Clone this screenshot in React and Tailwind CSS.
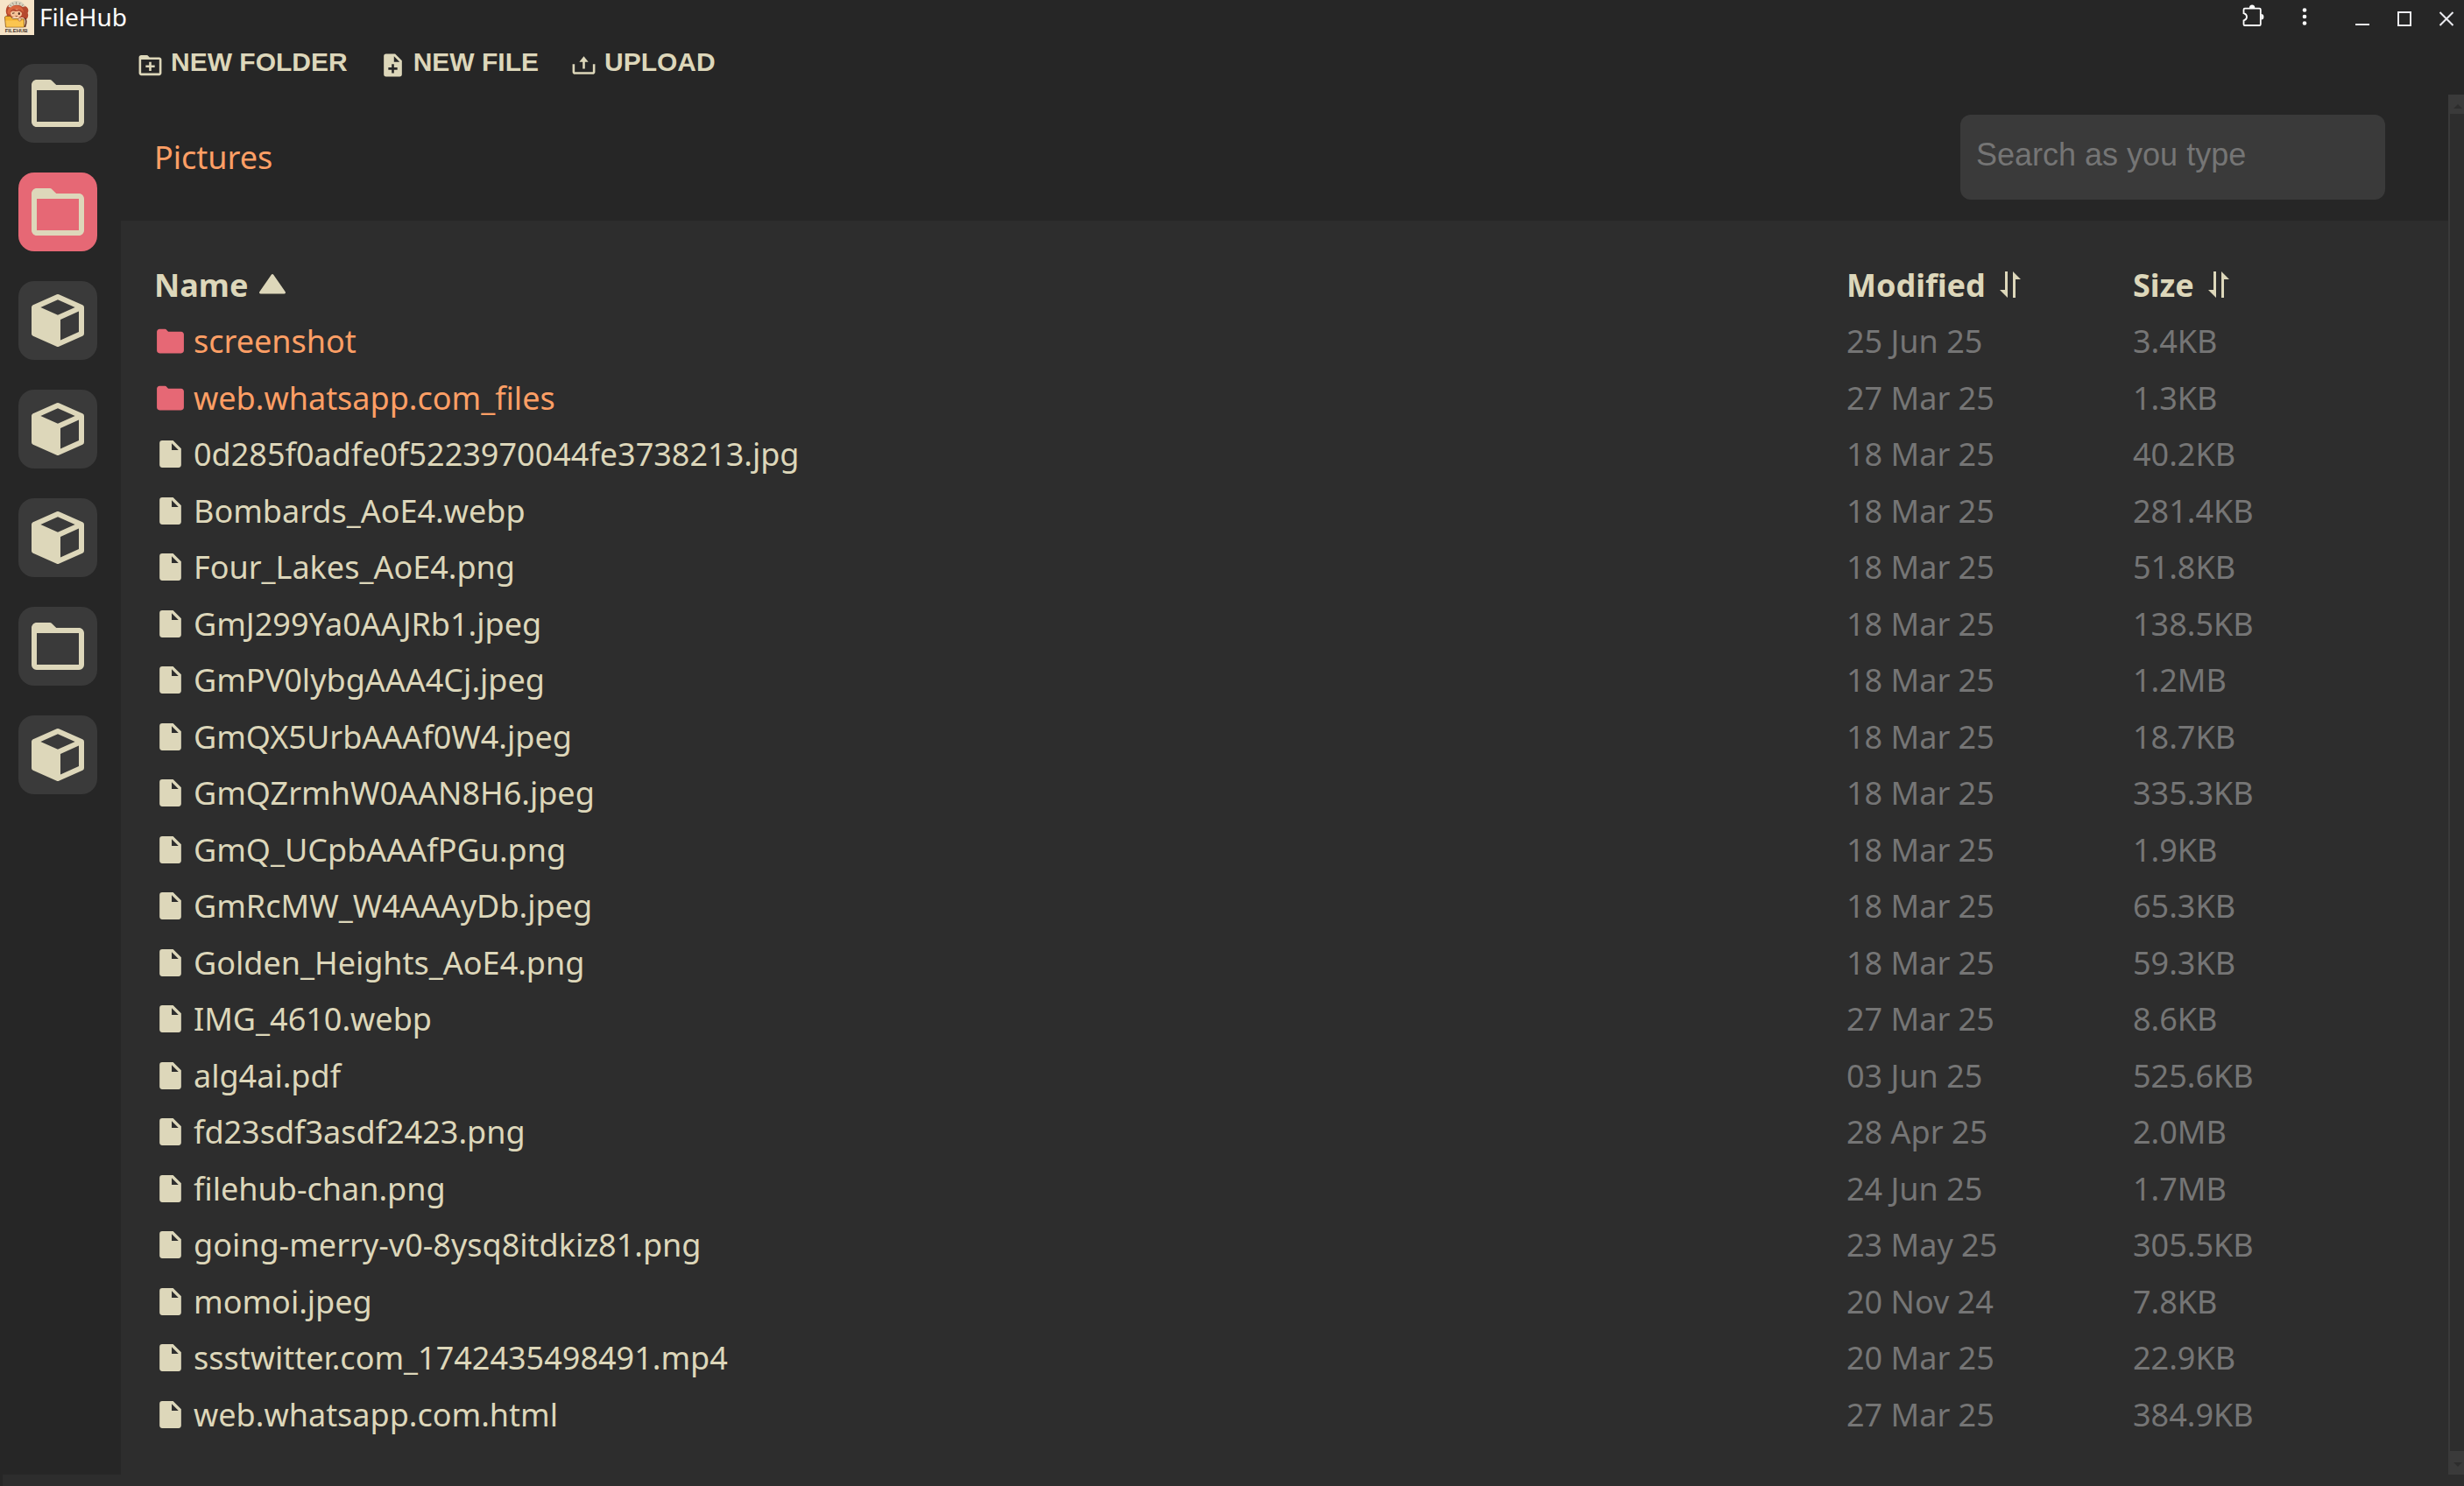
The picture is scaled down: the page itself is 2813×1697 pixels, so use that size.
import React from "react";
import {
  BiFolder,
  BiSolidCube,
  BiFolderPlus,
  BiSolidFilePlus,
  BiUpload,
  BiSolidFolder,
  BiSolidFileBlank,
  BiSolidUpArrow,
} from "react-icons/bi";

const places = [
  { label: "Home", icon: BiFolder },
  { label: "Pictures", icon: BiFolder, active: true },
  { label: "Volume 1", icon: BiSolidCube },
  { label: "Volume 2", icon: BiSolidCube },
  { label: "Volume 3", icon: BiSolidCube },
  { label: "Documents", icon: BiFolder },
  { label: "Volume 4", icon: BiSolidCube },
];

const actions = [
  { label: "NEW FOLDER", icon: BiFolderPlus },
  { label: "NEW FILE", icon: BiSolidFilePlus },
  { label: "UPLOAD", icon: BiUpload },
];

const files = [
  { name: "screenshot", modified: "25 Jun 25", size: "3.4KB", folder: true },
  { name: "web.whatsapp.com_files", modified: "27 Mar 25", size: "1.3KB", folder: true },
  { name: "0d285f0adfe0f5223970044fe3738213.jpg", modified: "18 Mar 25", size: "40.2KB" },
  { name: "Bombards_AoE4.webp", modified: "18 Mar 25", size: "281.4KB" },
  { name: "Four_Lakes_AoE4.png", modified: "18 Mar 25", size: "51.8KB" },
  { name: "GmJ299Ya0AAJRb1.jpeg", modified: "18 Mar 25", size: "138.5KB" },
  { name: "GmPV0lybgAAA4Cj.jpeg", modified: "18 Mar 25", size: "1.2MB" },
  { name: "GmQX5UrbAAAf0W4.jpeg", modified: "18 Mar 25", size: "18.7KB" },
  { name: "GmQZrmhW0AAN8H6.jpeg", modified: "18 Mar 25", size: "335.3KB" },
  { name: "GmQ_UCpbAAAfPGu.png", modified: "18 Mar 25", size: "1.9KB" },
  { name: "GmRcMW_W4AAAyDb.jpeg", modified: "18 Mar 25", size: "65.3KB" },
  { name: "Golden_Heights_AoE4.png", modified: "18 Mar 25", size: "59.3KB" },
  { name: "IMG_4610.webp", modified: "27 Mar 25", size: "8.6KB" },
  { name: "alg4ai.pdf", modified: "03 Jun 25", size: "525.6KB" },
  { name: "fd23sdf3asdf2423.png", modified: "28 Apr 25", size: "2.0MB" },
  { name: "filehub-chan.png", modified: "24 Jun 25", size: "1.7MB" },
  { name: "going-merry-v0-8ysq8itdkiz81.png", modified: "23 May 25", size: "305.5KB" },
  { name: "momoi.jpeg", modified: "20 Nov 24", size: "7.8KB" },
  { name: "ssstwitter.com_1742435498491.mp4", modified: "20 Mar 25", size: "22.9KB" },
  { name: "web.whatsapp.com.html", modified: "27 Mar 25", size: "384.9KB" },
];

function AppLogo() {
  return (
    <svg viewBox="0 0 39 40" className="h-10 w-[39px] shrink-0" aria-hidden="true">
      <rect width="39" height="40" fill="#f6e4c8" />
      <path d="M8 17C5.500 13 7 6 12 4.500C17 1.500 25 2 28.500 7C32 8 33.500 12 31.500 15C33 17 32 21 29.500 22.500L26 20H9C7 20 7 18 8 17Z" fill="#b5482e" />
      <path d="M8.500 15C8 10 12 6.500 18 6.500C23 6.500 26.500 9 27 14L23 11L15 12L11 17Z" fill="#d9663f" />
      <path d="M9.500 8C10 3 14.500 1 18.500 1C23 1 27.500 3 28.500 7.500L25.500 8C23 5 14.500 5 12.500 8.500Z" fill="#d8d0bd" />
      <path d="M11 5.500L13 7M14 3L15.500 5.500M18.500 2V5M23 3L22 5.500M26.500 5L25 7" stroke="#8f8674" strokeWidth="0.8" />
      <ellipse cx="18.500" cy="15.500" rx="6.500" ry="5" fill="#f5c398" />
      <path d="M11.500 14C13 10 17 9.500 19 11.500C21 10 24.500 11 25.500 15L22 12.500L18 13L14.500 12.500Z" fill="#b5482e" />
      <path d="M14 15.300L16.500 14.800" stroke="#4a2418" strokeWidth="1" />
      <ellipse cx="21.800" cy="15.500" rx="1.100" ry="1.500" fill="#4a2418" />
      <path d="M17.500 18.200Q18.800 19.200 20 18.200" stroke="#8a2f22" strokeWidth="0.800" fill="none" />
      <path d="M5.500 20C5.500 18.500 6.500 18.500 7.500 18.500H12L14.500 21.500H25.500Q27.500 21.500 27.500 23V31H6.500Z" fill="#f2b232" stroke="#8a5a20" strokeWidth="0.800" />
      <path d="M6.500 23.500H26.500L26.800 30.500H7.300Z" fill="#fbc550" />
      <circle cx="22.500" cy="22.300" r="1.800" fill="#f5c398" stroke="#8a4a28" strokeWidth="0.500" />
      <path d="M28 20.500Q31.500 23 28.500 31" stroke="#5e2c20" strokeWidth="1.500" fill="none" />
      <text x="18.700" y="37.300" textAnchor="middle" fontFamily="Liberation Sans, sans-serif" fontSize="6" fontWeight="bold" fill="#45332a">
        FILEHUB
      </text>
    </svg>
  );
}

function PuzzleIcon() {
  return (
    <svg viewBox="0 0 28 28" className="size-7" fill="none">
      <path
        d="M3.500 12.200V8Q3.500 6.700 4.800 6.700H21.500Q22.800 6.700 22.800 8V24.700Q22.800 26 21.500 26H4.800Q3.500 26 3.500 24.700V20.400C6 19.800 7 18.200 7 16.300S6 12.800 3.500 12.200Z"
        stroke="#fff"
        strokeWidth="1.800"
      />
      <path d="M9.900 6A3.200 3.500 0 0 1 16.300 6Z M23.400 13A3 3.200 0 0 1 23.400 19.400Z" fill="#fff" />
    </svg>
  );
}

function SortIcon() {
  return (
    <svg viewBox="0 0 24 24" className="size-9" fill="currentColor">
      <path d="M10 22L4 16H8V2H10ZM14 2L20 8H16V22H14Z" />
    </svg>
  );
}

function TitleBar() {
  return (
    <header className="flex h-[41px] items-start justify-between">
      <div className="flex items-start gap-1.5">
        <AppLogo />
        <h1 className="text-[28px] leading-[38px] text-white">FileHub</h1>
      </div>
      <div className="flex h-[38px] items-center text-[#ebebf0]">
        <button type="button" aria-label="Extensions" className="flex w-10 justify-center pb-1">
          <PuzzleIcon />
        </button>
        <button type="button" aria-label="More" className="ml-[19px] flex w-10 justify-center">
          <svg viewBox="0 0 6 22" className="h-[22px] w-1.5" fill="#fff">
            <circle cx="3" cy="3.500" r="2.300" />
            <circle cx="3" cy="11" r="2.300" />
            <circle cx="3" cy="18.500" r="2.300" />
          </svg>
        </button>
        <div className="ml-[26px] flex gap-2 pt-1">
          <button type="button" aria-label="Minimize" className="flex w-10 justify-center">
            <svg viewBox="0 0 18 18" className="size-[18px]">
              <path d="M1 16H17" stroke="currentColor" strokeWidth="2" />
            </svg>
          </button>
          <button type="button" aria-label="Maximize" className="flex w-10 justify-center">
            <svg viewBox="0 0 18 18" className="size-[18px]" fill="none">
              <rect x="2" y="2" width="14" height="15" stroke="currentColor" strokeWidth="2" />
            </svg>
          </button>
          <button type="button" aria-label="Close" className="flex w-10 justify-center">
            <svg viewBox="0 0 18 18" className="size-[18px]" fill="none">
              <path d="M1.500 2L16.500 17M16.500 2L1.500 17" stroke="currentColor" strokeWidth="2" />
            </svg>
          </button>
        </div>
      </div>
    </header>
  );
}

function Sidebar() {
  return (
    <nav aria-label="Places" className="flex w-[138px] shrink-0 flex-col items-center gap-[34px] pt-8 pr-1.5">
      {places.map(({ label, icon: Icon, active }) => (
        <button
          key={label}
          type="button"
          aria-label={label}
          className={
            active
              ? "flex size-[90px] items-center justify-center rounded-[18px] bg-[#e66875]"
              : "flex size-[90px] items-center justify-center rounded-[18px] bg-[#3a3a3a]"
          }
        >
          <Icon className="size-[72px]" />
        </button>
      ))}
    </nav>
  );
}

function Toolbar() {
  return (
    <div className="flex h-[67px] items-start gap-9 pt-[11px] pl-[18px]">
      {actions.map(({ label, icon: Icon }) => (
        <button
          key={label}
          type="button"
          className="flex items-end gap-2 font-['Liberation_Sans',sans-serif] text-[30px] leading-[38px] font-bold"
        >
          <Icon className="size-[31px]" />
          {label}
        </button>
      ))}
    </div>
  );
}

function FileTable() {
  return (
    <table className="w-full table-fixed text-left text-[36px] leading-[49px]">
      <colgroup>
        <col />
        <col className="w-[327px]" />
        <col className="w-[288px]" />
      </colgroup>
      <thead>
        <tr className="h-16">
          <th className="p-0">
            <button type="button" className="flex items-center gap-2.5 font-bold">
              Name <BiSolidUpArrow className="size-9" />
            </button>
          </th>
          <th className="p-0">
            <button type="button" className="flex items-center gap-2.5 font-bold">
              Modified <SortIcon />
            </button>
          </th>
          <th className="p-0">
            <button type="button" className="flex items-center gap-2.5 font-bold">
              Size <SortIcon />
            </button>
          </th>
        </tr>
      </thead>
      <tbody>
        {files.map((file) => (
          <tr key={file.name} className="odd:h-[65px] even:h-16">
            <td className="p-0">
              <a
                href="#"
                className={file.folder ? "flex items-center gap-2 text-[#ff9f65]" : "flex items-center gap-2"}
              >
                {file.folder ? (
                  <BiSolidFolder className="size-[37px] text-[#e66875]" />
                ) : (
                  <BiSolidFileBlank className="size-[37px]" />
                )}
                {file.name}
              </a>
            </td>
            <td className="p-0 text-[#757575]">{file.modified}</td>
            <td className="p-0 text-[#757575]">{file.size}</td>
          </tr>
        ))}
      </tbody>
    </table>
  );
}

function ScrollBar() {
  return (
    <div className="flex w-[18px] shrink-0 flex-col bg-[#3a3a3a]" aria-hidden="true">
      <div className="flex h-[22px] items-center justify-center pt-1 pl-1">
        <svg viewBox="0 0 10 5" className="h-[5px] w-2.5">
          <path d="M0 5L5 0L10 5Z" fill="#2d2d2d" />
        </svg>
      </div>
      <div className="ml-0.5 flex-1 bg-[#2d2d2d]" />
      <div className="flex h-[27px] items-center justify-center pt-1 pl-1">
        <svg viewBox="0 0 10 5" className="h-[5px] w-2.5">
          <path d="M0 0L5 5L10 0Z" fill="#2d2d2d" />
        </svg>
      </div>
    </div>
  );
}

export default function App() {
  return (
    <div className="flex min-h-screen flex-col bg-[#262626] font-['Noto_Sans',sans-serif] text-[#ddd7ba]">
      <TitleBar />
      <div className="flex flex-1">
        <Sidebar />
        <div className="flex min-w-0 flex-1 flex-col">
          <Toolbar />
          <div className="flex flex-1">
            <main className="flex min-w-0 flex-1 flex-col">
              <div className="flex h-36 items-center justify-between pr-[72px] pb-0.5 pl-[38px]">
                <a href="#" className="text-[36px] leading-[49px] text-[#ff9f65]">
                  Pictures
                </a>
                <input
                  type="text"
                  aria-label="Search files"
                  placeholder="Search as you type"
                  className="h-[97px] w-[485px] rounded-xl bg-[#3a3a3a] px-[18px] pb-1 font-['Liberation_Sans',sans-serif] text-[36px] placeholder:text-[#757575]"
                />
              </div>
              <div className="flex-1 bg-[#2d2d2d] pt-[41px] pr-[72px] pl-[38px]">
                <FileTable />
              </div>
            </main>
            <ScrollBar />
          </div>
        </div>
      </div>
      <footer className="ml-[3px] h-[13px] bg-[#2d2d2d]" />
    </div>
  );
}
